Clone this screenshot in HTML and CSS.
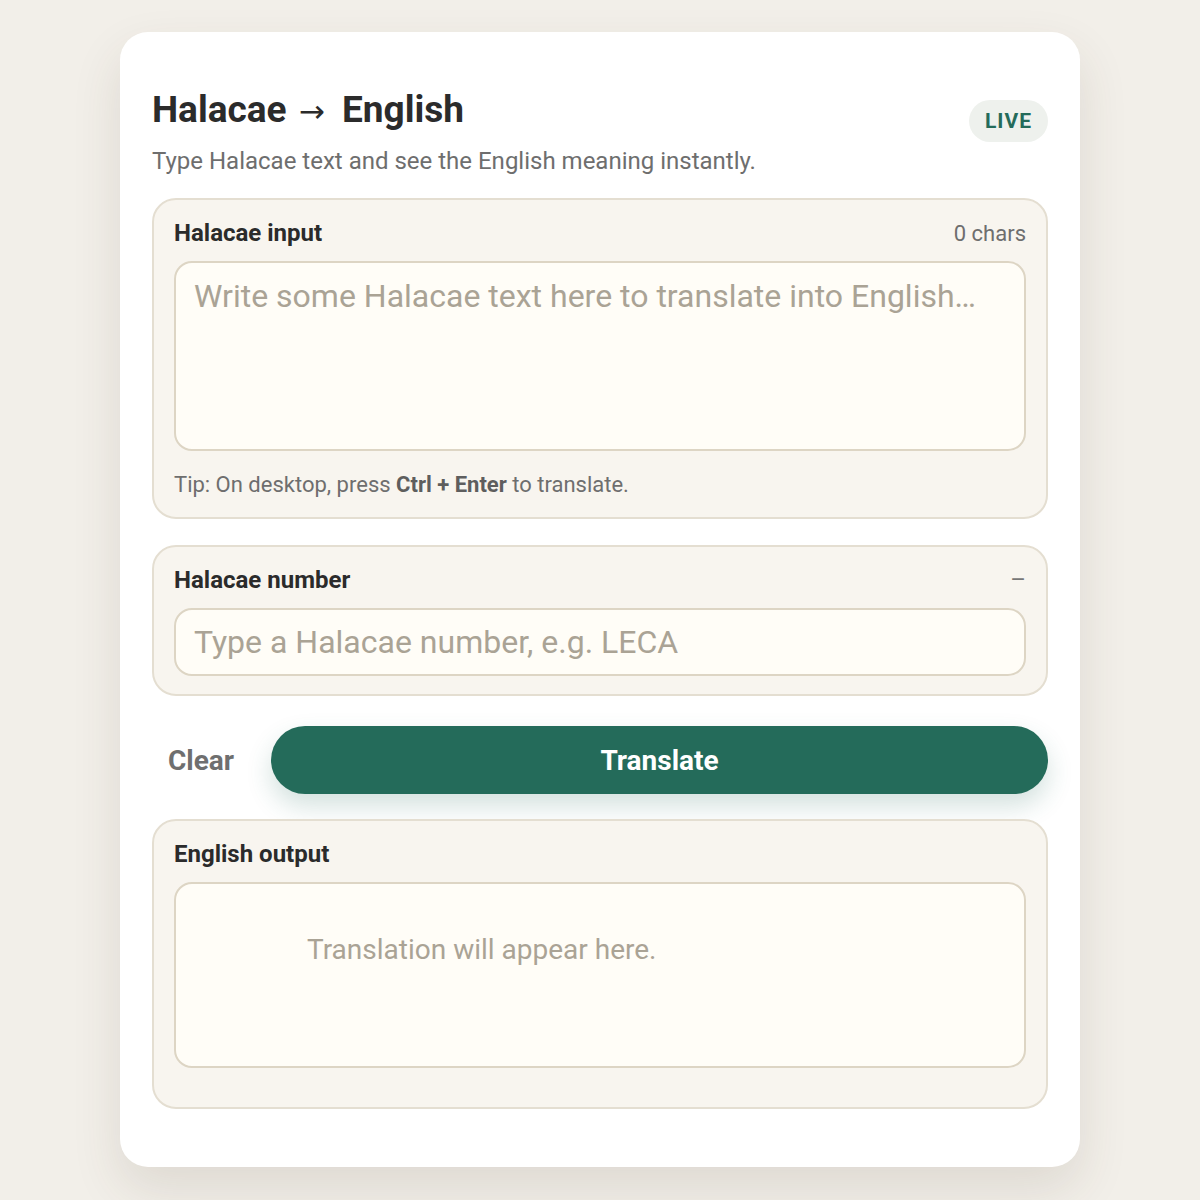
FILE: index.html
```html
<!DOCTYPE html>
<html lang="en">
<head>
  <meta charset="UTF-8" />
  <meta name="viewport" content="width=device-width, initial-scale=1" />
  <title>Halacae → English</title>
  <link rel="stylesheet" href="styles.css">
</head>
<body>
  <main class="card">
    <header class="head">
      <div>
        <h1>Halacae <span class="arrow">→</span> English</h1>
        <p class="sub">Type Halacae text and see the English meaning instantly.</p>
      </div>
      <span class="badge">LIVE</span>
    </header>

    <section class="panel">
      <div class="panel-top">
        <label for="src">Halacae input</label>
        <span class="count">0 chars</span>
      </div>
      <textarea id="src" class="field area" placeholder="Write some Halacae text here to translate into English…"></textarea>
      <p class="tip">Tip: On desktop, press <b>Ctrl + Enter</b> to translate.</p>
    </section>

    <section class="panel">
      <div class="panel-top">
        <label for="num">Halacae number</label>
        <span class="dash">–</span>
      </div>
      <input id="num" class="field line" type="text" placeholder="Type a Halacae number, e.g. LECA" />
    </section>

    <div class="actions">
      <button type="button" class="clear">Clear</button>
      <button type="button" class="go">Translate</button>
    </div>

    <section class="panel out-panel">
      <div class="panel-top">
        <label>English output</label>
      </div>
      <div class="field output">
        <span class="empty">Translation will appear here.</span>
      </div>
    </section>
  </main>
</body>
</html>
```

FILE: styles.css
```css
html { background: #f2efe9; }
body { margin: 0; padding: 32px 0 33px; font-family: Roboto, "Noto Sans", Arial, sans-serif; color: #2b2b2b; }

.card { width: 960px; margin: 0 auto; box-sizing: border-box; background: #fff; border-radius: 28px; padding: 57px 32px 58px; display: flex; flex-direction: column; gap: 26px; box-shadow: 0 22px 50px rgba(70, 60, 40, 0.12); }

.head { display: flex; justify-content: space-between; align-items: flex-start; margin-bottom: -5px; }
h1 { margin: 0; font-size: 37px; line-height: 41px; font-weight: 700; color: #2b2b2b; }
.arrow { font-family: "DejaVu Sans", sans-serif; font-weight: 400; font-size: 31px; margin: 0 8px 0 3px; }
.sub { margin: 14px 0 0; font-size: 24px; line-height: 31px; color: #6e6e6e; }
.badge { margin-top: 11px; height: 42px; line-height: 42px; padding: 0 16px; border-radius: 21px; background: #eef1ed; color: #246b5a; font-weight: 700; font-size: 21px; letter-spacing: 1px; }

.panel { background: #f8f5ef; border: 2px solid #e4ded1; border-radius: 24px; padding: 19px 20px 18px; }
.panel-top { display: flex; justify-content: space-between; align-items: center; margin-bottom: 13px; }
.panel-top label { font-size: 24px; line-height: 29px; font-weight: 700; color: #2b2b2b; }
.count { font-size: 22px; color: #6e6e6e; }
.dash { font-size: 24px; line-height: 29px; color: #777; }

.field { display: block; width: 100%; box-sizing: border-box; background: #fffdf7; border: 2px solid #ddd5c4; border-radius: 18px; font-family: inherit; color: #2b2b2b; outline: none; }
.field::placeholder { color: #aaa395; }
.area { height: 190px; resize: none; padding: 12px 18px; font-size: 32px; line-height: 42px; }
.line { height: 68px; padding: 0 18px; font-size: 32px; }
.tip { margin: 20px 0 0; font-size: 22px; line-height: 28px; color: #6e6e6e; }
.tip b { color: #5e5e5e; }

.actions { display: flex; align-items: center; gap: 37px; margin: 4px 0 -1px; }
button { font-family: inherit; cursor: pointer; border: 0; }
.clear { background: none; padding: 0 0 0 16px; font-size: 28px; font-weight: 700; color: #6f6f6f; }
.go { flex: 1; height: 68px; border-radius: 34px; background: #246b5a; color: #fff; font-size: 28px; font-weight: 700; box-shadow: 0 12px 26px rgba(36, 107, 90, 0.2); }

.output { height: 186px; padding: 47px 0 0 131px; margin-bottom: 21px; }
.empty { font-size: 28px; line-height: 38px; color: #aaa395; }
```
